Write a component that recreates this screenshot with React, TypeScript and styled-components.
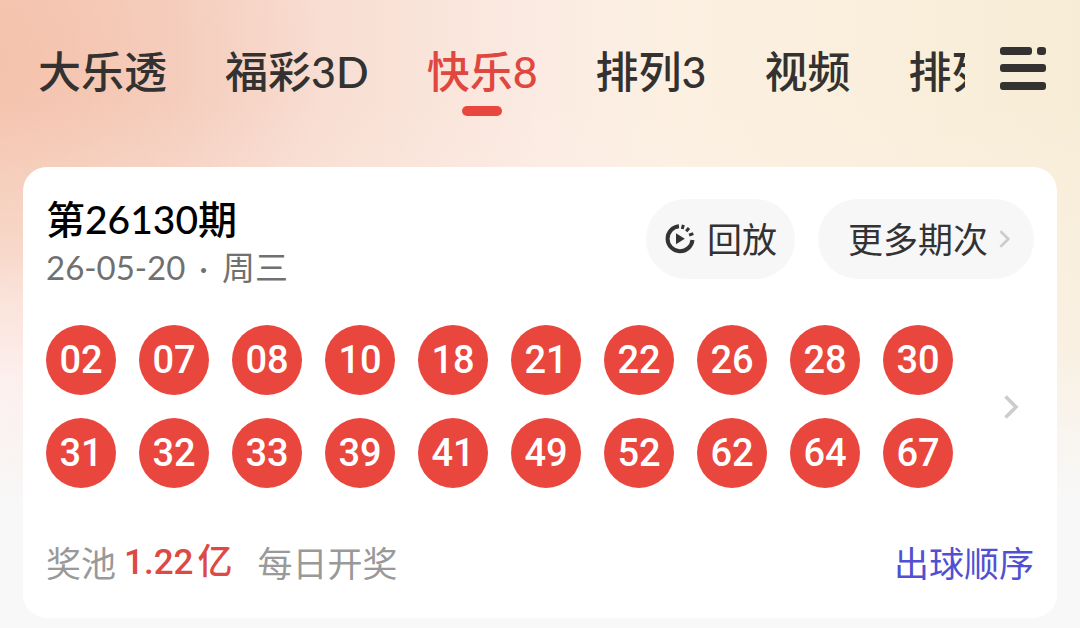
import React from "react";
import styled, { createGlobalStyle } from "styled-components";

const cjk = `"Noto Sans CJK SC", sans-serif`;

const GlobalStyle = createGlobalStyle`
  * { box-sizing: border-box; }
  body {
    margin: 0;
    background: #f8f8f8;
    font-family: Lato, ${cjk};
  }
  button {
    border: 0;
    padding: 0;
    background: none;
    color: inherit;
    font: inherit;
    cursor: pointer;
  }
`;

const Page = styled.div`
  min-height: 100vh;
  padding-bottom: 10px;
  background:
    linear-gradient(to bottom, rgba(248, 248, 248, 0) 340px, #f8f8f8 500px),
    radial-gradient(ellipse 200px 150px at 0 400px, rgba(255, 240, 240, 0.9), rgba(255, 240, 240, 0)),
    linear-gradient(to bottom, rgba(252, 242, 236, 0) 100px, rgba(252, 242, 236, 0.5) 320px),
    radial-gradient(circle at 0 60px, rgba(243, 184, 157, 0.55), rgba(243, 184, 157, 0) 320px),
    linear-gradient(to right, #f5cfbe 0%, #f6d4c7 17%, #f9e0d5 34%, #fbebe3 50%, #fcf0e2 62%, #faefdc 80%, #f7edd6 100%);
`;

const TopBar = styled.header`
  display: flex;
  align-items: flex-start;
  padding: 44px 34px 51px 38px;
`;

const Tabs = styled.nav`
  display: flex;
  flex: 1;
  min-width: 0;
  gap: 58px;
  overflow: hidden;
`;

const Tab = styled.button<{ $active?: boolean }>`
  display: flex;
  flex-direction: column;
  align-items: center;
  flex: none;
  gap: 6px;
  color: ${(p) => (p.$active ? "#e0473f" : "#333230")};
  font-size: 43px;
  font-weight: 500;
  line-height: 56px;
  white-space: nowrap;

  &::after {
    content: "";
    width: 40px;
    height: 10px;
    border-radius: 5px;
    background: ${(p) => (p.$active ? "#e8463e" : "transparent")};
  }
`;

const MenuButton = styled.button`
  flex: none;
  margin-left: 35px;
  height: 48px;

  svg { display: block; }
`;

const Card = styled.main`
  margin: 0 23px;
  padding: 32px 23px 30px;
  border-radius: 24px;
  background: #fff;
`;

const CardHead = styled.div`
  display: flex;
  align-items: flex-start;
  justify-content: space-between;
`;

const Issue = styled.h1`
  margin: 0;
  color: #000;
  font-size: 39px;
  font-weight: 500;
  line-height: 40px;
`;

const DrawDate = styled.p`
  display: flex;
  gap: 14px;
  margin: 0;
  color: #707070;
  font-size: 33px;
  line-height: 56px;
`;

const Actions = styled.div`
  display: flex;
  gap: 23px;
`;

const Pill = styled.button`
  display: flex;
  align-items: center;
  gap: 11px;
  height: 80px;
  padding: 0 18px;
  border-radius: 40px;
  background: #f7f7f7;
  color: #333;
  font-size: 35px;
  line-height: 48px;
  white-space: nowrap;
`;

const MorePill = styled(Pill)`
  padding: 0 24px 0 30px;
`;

const Result = styled.section`
  display: flex;
  align-items: center;
  justify-content: space-between;
  margin-top: 30px;
`;

const Balls = styled.ol`
  display: grid;
  grid-template-columns: repeat(10, 70px);
  gap: 23px;
  margin: 0;
  padding: 0;
  list-style: none;
`;

const Ball = styled.li`
  height: 70px;
  border-radius: 50%;
  background: #e9463e;
  color: #fff;
  font-family: Roboto, sans-serif;
  font-size: 38px;
  font-weight: 500;
  line-height: 70px;
  text-align: center;
`;

const DetailButton = styled.button`
  padding: 12px 15px;

  svg { display: block; }
`;

const CardFoot = styled.footer`
  display: flex;
  align-items: center;
  margin-top: 50px;
  color: #999;
  font-size: 35px;
  line-height: 50px;
  white-space: nowrap;
`;

const Pool = styled.strong`
  display: flex;
  gap: 4px;
  margin: 0 25px 0 8px;
  color: #dc4a43;
  font-family: Roboto, ${cjk};
  font-weight: 500;
`;

const OrderLink = styled.a`
  margin-left: auto;
  color: #5150d2;
  text-decoration: none;
`;

const MenuIcon = () => (
  <svg width="46" height="48" viewBox="0 0 46 48" fill="#333230" aria-hidden="true">
    <rect x="0" y="3" width="32" height="8" rx="3" />
    <rect x="37" y="3" width="9" height="8" rx="3" />
    <rect x="0" y="20" width="46" height="8" rx="3" />
    <rect x="0" y="38" width="46" height="8" rx="3" />
  </svg>
);

const ReplayIcon = () => (
  <svg width="32" height="32" viewBox="0 0 32 32" fill="none" stroke="#333" strokeWidth="4" aria-hidden="true">
    <path d="M15 3.2A12.5 12.5 0 1 0 28.5 17" />
    <path d="M19.3 1.8l-1 4.2M25 5l-2.8 3.3M29.3 10.7l-4.2 1.5" strokeWidth="3" />
    <path d="M12 10.2v11l8.8-5.5z" fill="#333" stroke="none" />
  </svg>
);

const Chevron = ({ width, height }: { width: number; height: number }) => (
  <svg width={width} height={height} viewBox="0 0 14 24" fill="none" stroke="#ccc" strokeWidth="3.6" aria-hidden="true">
    <path d="M1.5 1.5L12 12L1.5 22.5" />
  </svg>
);

const tabs = ["大乐透", "福彩3D", "快乐8", "排列3", "视频", "排列5"];
const numbers = [
  "02", "07", "08", "10", "18", "21", "22", "26", "28", "30",
  "31", "32", "33", "39", "41", "49", "52", "62", "64", "67",
];

export default function App() {
  return (
    <Page>
      <GlobalStyle />
      <TopBar>
        <Tabs>
          {tabs.map((name) => (
            <Tab key={name} $active={name === "快乐8"}>{name}</Tab>
          ))}
        </Tabs>
        <MenuButton aria-label="菜单"><MenuIcon /></MenuButton>
      </TopBar>
      <Card>
        <CardHead>
          <div>
            <Issue>第26130期</Issue>
            <DrawDate><span>26-05-20</span><span>·</span><span>周三</span></DrawDate>
          </div>
          <Actions>
            <Pill><ReplayIcon />回放</Pill>
            <MorePill>更多期次<Chevron width={11} height={18} /></MorePill>
          </Actions>
        </CardHead>
        <Result>
          <Balls>
            {numbers.map((n) => <Ball key={n}>{n}</Ball>)}
          </Balls>
          <DetailButton aria-label="详情"><Chevron width={16} height={24} /></DetailButton>
        </Result>
        <CardFoot>
          <span>奖池</span>
          <Pool><span>1.22</span><span>亿</span></Pool>
          <span>每日开奖</span>
          <OrderLink href="#order">出球顺序</OrderLink>
        </CardFoot>
      </Card>
    </Page>
  );
}
